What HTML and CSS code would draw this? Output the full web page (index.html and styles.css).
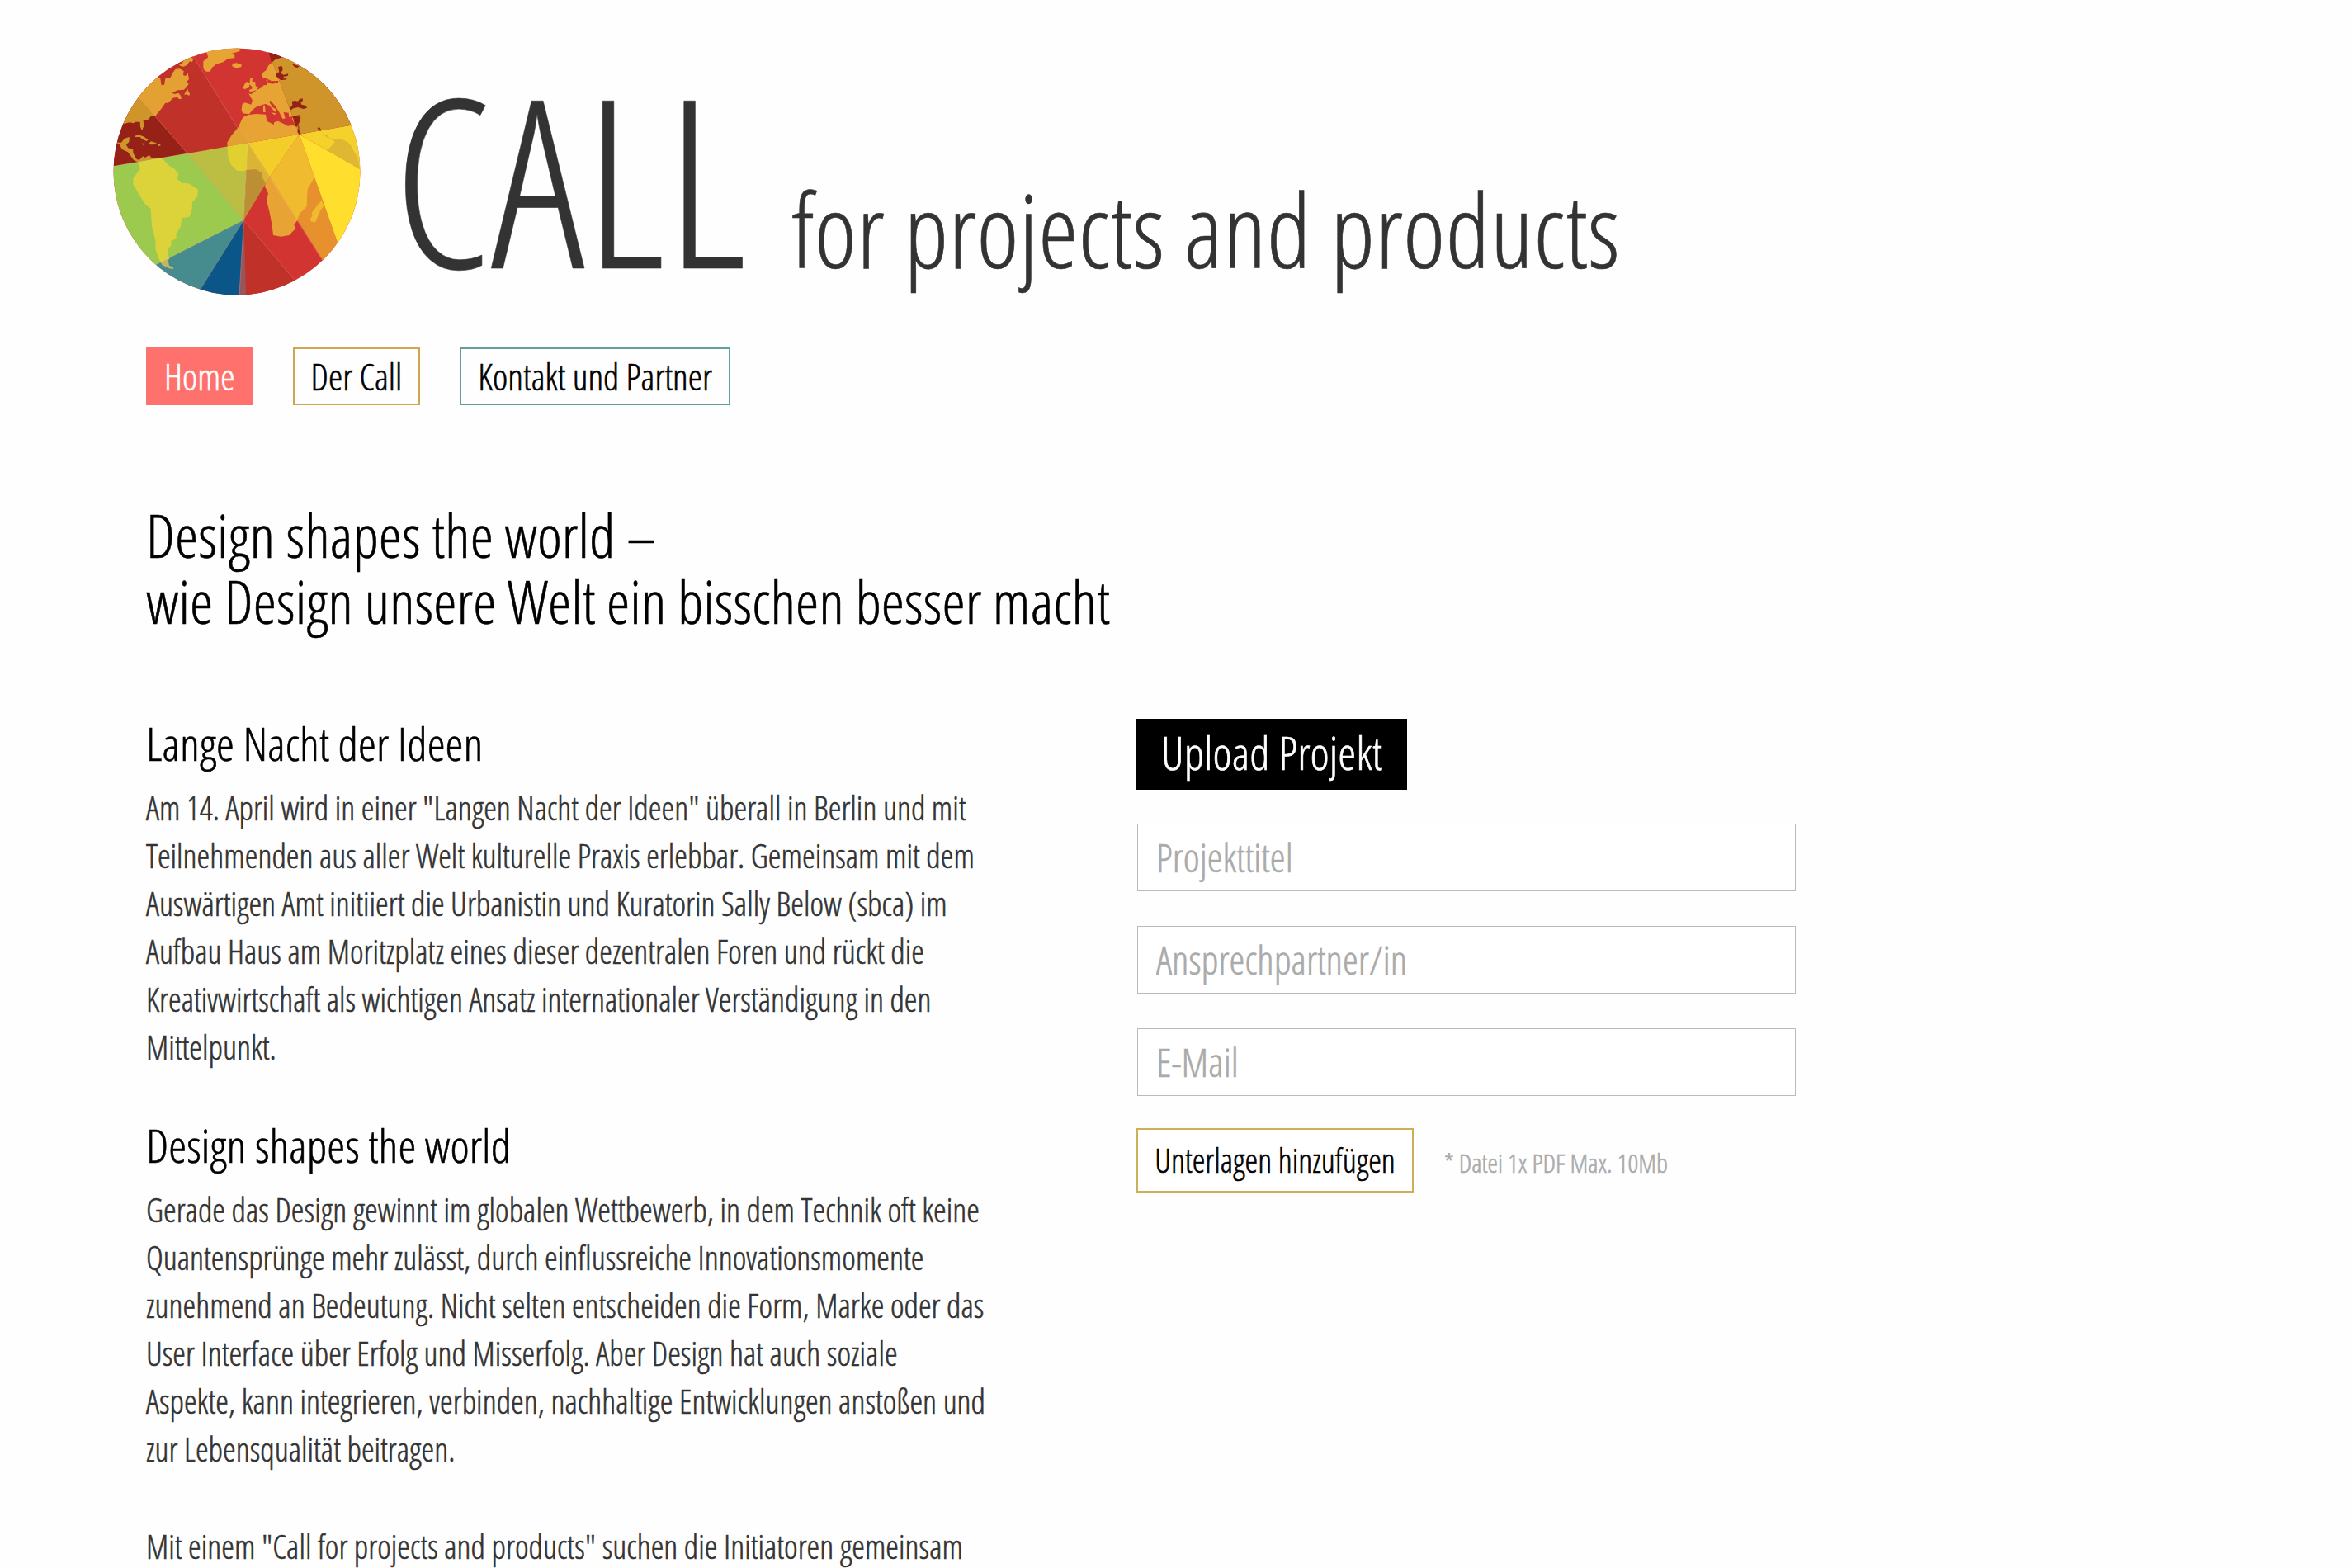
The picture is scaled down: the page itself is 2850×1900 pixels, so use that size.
FILE: index.html
```html
<!DOCTYPE html>
<html lang="de">
<head>
<meta charset="utf-8">
<title>CALL for projects and products</title>
<link rel="stylesheet" href="styles.css">
</head>
<body>
<header class="header">
  <svg class="globe" viewBox="50 56 900 900" aria-hidden="true">
    <defs>
      <clipPath id="disc"><circle cx="500" cy="506" r="448.5"/></clipPath>
      <clipPath id="r1"><path d="M0 495L320 440 145 238 0 70Z"/></clipPath>
      <clipPath id="r2"><path d="M145 238L320 440 540 402 500 343 340 85 300 0 0 0 0 70Z"/></clipPath>
      <clipPath id="r3"><path d="M320 0L340 85 500 343 540 402 727 370 615 70 590 0Z"/></clipPath>
      <clipPath id="r4"><path d="M590 0L615 70 727 370 1000 323V0Z"/></clipPath>
      <clipPath id="r5"><path d="M0 495L320 440 525 682 205 845 0 950Z"/></clipPath>
      <clipPath id="r6"><path d="M320 440L540 402 525 682Z"/></clipPath>
      <clipPath id="r7"><path d="M540 402L525 682 620 525Z"/></clipPath>
      <clipPath id="r8"><path d="M620 525L525 682 760 960 890 950Z"/></clipPath>
      <clipPath id="r9"><path d="M727 370L620 525 890 950 932 950Z"/></clipPath>
      <clipPath id="r10"><path d="M525 682L205 845 0 950 360 950Z"/></clipPath>
      <path id="land" d="M388 68L396 90 378 105 378 130Q384 145 402 142L412 126 425 115 450 108 468 95 492 93 492 82 478 78 511 68 508 40 388 40Z
        M483 113L500 111 518 118 515 126 498 129 484 124Z
        M213 162L222 168 226 192 236 190 240 168 258 165 268 145 277 133 292 132 307 140 305 155 313 158 322 148 326 170 318 178 325 188 318 197 308 208 284 210 264 220 275 224 288 220 296 230 299 241 289 242 284 235 268 238 250 256 240 256 225 278 203 304 188 304 178 316 160 320 162 340 155 357 149 343 148 325 130 325 125 330 110 327 88 332 20 332 20 160Z
        M320 203L324 215 329 222 327 230 318 225 308 226 315 215Z
        M288 112L301 115 308 95 320 100 330 88 342 95 338 107 328 105 320 118 306 124 294 121Z
        M62 400L80 400 92 385 110 380 108 398 98 408 104 420 122 425 124 440 135 460 145 464 158 450 166 455 182 446 188 454 208 457 230 458 240 470 255 485 275 498 288 515 284 535 292 538 300 547 325 549 350 565 359 572 357 595 338 617 337 645 328 670 300 675 296 705 279 735 280 750 262 757 261 776 248 785 248 805 256 822 250 828 254 848 266 852 271 860 254 858 228 845 214 818 205 790 204 755 191 705 187 642 166 624 138 578 123 552 123 530 148 498 145 473 125 464 104 435 82 424 74 408Z
        M127 377L142 372 160 378 178 390 172 395 156 388 148 380 130 380Z M179 404L188 396 208 402 204 407 188 408Z M212 405H222V412H214Z M155 402L164 406 158 409Z
        M521 294L517 282 520 260 530 255 552 262 557 247 543 222 552 225 572 210 590 200 598 192 609 191 607 172 612 168 612 185 622 183 626 188 650 182 652 168 660 172 678 172 684 165 640 176 625 176 614 170 604 166 595 168 592 148 606 138 615 120 640 98 660 92 720 30 1000 50V325L727 370 722 340 700 338 685 340 676 335 650 322 636 326 634 335 609 322 605 298 570 296 540 300 522 308 505 345 480 375 465 400 468 455 480 482 500 502 525 504 535 500 570 497 590 510 592 528 604 545 602 560 614 585 608 610 618 650 628 700 632 737 660 742 690 737 714 712 708 700 720 683 728 658 754 633 757 570 780 530 830 430 727 370 726 340 710 335 700 310 712 312 729 306 727 300 690 308 688 292 670 290 676 312 667 315 654 290 640 268 622 247 618 253 630 272 644 280 642 291 632 282 618 265 604 260 590 264 572 270 558 280 545 297Z
        M552 164L557 168 555 178 567 180 568 194 577 200 572 210 548 216 544 210 556 204 554 196 546 188 548 170Z M528 188L536 179 547 184 545 200 527 207 523 200Z
        M623 291L642 294 638 300Z M596 265H602L604 290H596Z
        M807 611L817 630 803 648 786 689 770 688 767 678 775 665 772 655 790 632Z"/>
    </defs>
    <g clip-path="url(#disc)">
      <rect x="40" y="40" width="920" height="920" fill="#d23431"/>
      <path fill="#962117" d="M0 495L320 440 145 238 0 70Z"/>
      <path fill="#c0312a" d="M145 238L320 440 540 402 500 343 340 85 300 0 0 0 0 70Z"/>
      <path fill="#962117" d="M590 0L615 70 727 370 1000 323V0Z"/>
      <path fill="#9bca4e" d="M0 495L320 440 525 682 205 845 0 950Z"/>
      <path fill="#bcbd43" d="M320 440L540 402 525 682Z"/>
      <path fill="#bc8f35" d="M540 402L525 682 620 525Z"/>
      <path fill="#f3ce2a" d="M540 402L727 370 620 525Z"/>
      <path fill="#e6912d" d="M727 370L620 525 890 950 932 950Z"/>
      <path fill="#ffde2e" d="M727 370L932 950 1000 950V527Z"/>
      <path fill="#f4d12b" d="M727 370L1000 323V527Z"/>
      <path fill="#dfb732" d="M803 357L815 370 830 375 838 385 862 390 882 388 905 400 918 415 928 438 938 450 948 497 818 422 835 422 856 400 848 385 830 383 815 372Z"/>
      <path fill="#468c8e" d="M525 682L205 845 0 950 357 950Z"/>
      <path fill="#0a5689" d="M525 682L350 962H508Z"/>
      <path fill="#97575a" d="M525 682L508 970H535Z"/>
      <path fill="#c0312a" d="M525 682L534 970H770Z"/>
      <use href="#land" fill="#cf952b" clip-path="url(#r1)"/>
      <use href="#land" fill="#e2a132" clip-path="url(#r2)"/>
      <use href="#land" fill="#e7a434" clip-path="url(#r3)"/>
      <use href="#land" fill="#cf952b" clip-path="url(#r4)"/>
      <use href="#land" fill="#dcd23a" clip-path="url(#r5)"/>
      <use href="#land" fill="#e2d030" clip-path="url(#r6)"/>
      <use href="#land" fill="#dcb433" clip-path="url(#r7)"/>
      <use href="#land" fill="#e7a434" clip-path="url(#r8)"/>
      <use href="#land" fill="#f0bb2e" clip-path="url(#r9)"/>
      <use href="#land" fill="#c5b562" clip-path="url(#r10)"/>
      <path fill="#962117" d="M600 60L617 74 625 106 640 98 652 92 664 92 662 60Z M650 125L664 122 667 135 660 148 670 154 687 150 685 158 670 160 670 172 660 174 644 160 642 150 654 144Z M700 114L728 123 720 128 710 126Z M691 277L702 264 700 250 712 248 722 250 728 242 739 240 740 248 732 254 735 262 752 266 755 274 742 278 722 272 705 276 697 282Z M704 308L732 307 731 318 724 334 716 345 710 335Z M722 348L733 368 727 371 720 362Z M792 347L800 345 808 356 803 358Z"/>
      <path class="seam" d="M145 238L320 440 525 682 712 902M340 85L500 343 540 402 720 685 812 830M0 495L320 440M540 402L525 682 205 845M525 682L508 970M525 682L365 938"/>
    </g>
  </svg>
  <h1 class="title"><span class="call">CALL</span><span class="sub">for projects and products</span></h1>
</header>
<nav class="nav">
  <a class="tab tab-home">Home</a>
  <a class="tab tab-call">Der Call</a>
  <a class="tab tab-kontakt">Kontakt und Partner</a>
</nav>
<main class="main">
  <h2 class="headline">Design shapes the world –<br>wie Design unsere Welt ein bisschen besser macht</h2>
  <div class="columns">
    <div class="text">
      <h3>Lange Nacht der Ideen</h3>
      <p>Am 14. April wird in einer "Langen Nacht der Ideen" überall in Berlin und mit<br>Teilnehmenden aus aller Welt kulturelle Praxis erlebbar. Gemeinsam mit dem<br>Auswärtigen Amt initiiert die Urbanistin und Kuratorin Sally Below (sbca) im<br>Aufbau Haus am Moritzplatz eines dieser dezentralen Foren und rückt die<br>Kreativwirtschaft als wichtigen Ansatz internationaler Verständigung in den<br>Mittelpunkt.</p>
      <h3>Design shapes the world</h3>
      <p>Gerade das Design gewinnt im globalen Wettbewerb, in dem Technik oft keine<br>Quantensprünge mehr zulässt, durch einflussreiche Innovationsmomente<br>zunehmend an Bedeutung. Nicht selten entscheiden die Form, Marke oder das<br>User Interface über Erfolg und Misserfolg. Aber Design hat auch soziale<br>Aspekte, kann integrieren, verbinden, nachhaltige Entwicklungen anstoßen und<br>zur Lebensqualität beitragen.</p>
      <p>Mit einem "Call for projects and products" suchen die Initiatoren gemeinsam</p>
    </div>
    <form class="form">
      <div class="upload">Upload Projekt</div>
      <input class="field" type="text" placeholder="Projekttitel">
      <input class="field" type="text" placeholder="Ansprechpartner/in">
      <input class="field" type="text" placeholder="E-Mail">
      <div class="attach">
        <button class="add" type="button">Unterlagen hinzufügen</button>
        <span class="note">* Datei 1x PDF Max. 10Mb</span>
      </div>
    </form>
  </div>
</main>
</body>
</html>
```
FILE: styles.css
```css
* { box-sizing: border-box; margin: 0; padding: 0; }
html { height: 1900px; overflow: hidden; }
body {
  height: 1900px;
  overflow: hidden;
  background: #fefefe;
  color: #000;
  font-family: "Open Sans Condensed Light", "Open Sans", sans-serif;
  font-weight: 300;
  font-stretch: 75%;
  font-kerning: none;
  -webkit-text-stroke: .6px;
}
.header { display: flex; height: 421px; padding: 58px 0 0 137px; }
.globe { width: 300px; height: 300px; flex: none; }
.seam { fill: none; stroke: #fff; stroke-opacity: .35; stroke-width: 1.5; }
.title {
  display: flex;
  align-items: baseline;
  margin: 15px 0 0 39px;
  height: 284px;
  line-height: 284px;
  font-weight: 300;
  color: #333;
  white-space: nowrap;
}
.call { font-size: 284px; }
.sub { font-size: 124px; margin-left: 54px; }
.nav { display: flex; gap: 48px; padding-left: 177px; }
.tab {
  height: 70px;
  line-height: 66px;
  padding: 0 20px;
  border: 2px solid;
  font-size: 44px;
  white-space: nowrap;
}
.tab-home { background: #ff716c; border-color: #ff716c; color: #fff; }
.tab-call { border-color: #cfa550; }
.tab-kontakt { border-color: #619f9f; }
.main { padding: 117px 0 0 177px; }
.headline { font-size: 72px; line-height: 80px; font-weight: 300; white-space: nowrap; }
.columns { display: flex; margin-top: 103px; }
.text { width: 1200px; flex: none; white-space: nowrap; }
.text h3 { font-size: 56px; line-height: 58px; font-weight: 300; margin-bottom: 21px; }
.text p { font-size: 40px; line-height: 58px; color: #333; margin-bottom: 60px; }
.form { width: 800px; display: flex; flex-direction: column; align-items: flex-start; }
.upload {
  width: 328px;
  height: 86px;
  line-height: 80px;
  padding: 0 30px;
  margin-bottom: 41px;
  background: #000;
  color: #fff;
  font-size: 56px;
  white-space: nowrap;
}
.field {
  width: 798px;
  height: 82px;
  margin: 0 0 42px 1px;
  padding: 0 22px 1px;
  border: 1px solid #bbb;
  background: #fff;
  font: inherit;
  font-kerning: none;
  font-size: 48px;
}
.field::placeholder { color: #aaa; opacity: 1; }
.attach { display: flex; align-items: baseline; margin-top: -3px; }
.add {
  width: 336px;
  height: 78px;
  padding: 0 0 1px;
  border: 2px solid #cdb055;
  background: #fff;
  font: inherit;
  font-kerning: none;
  font-size: 40px;
  color: #000;
}
.note { margin-left: 37px; font-size: 32px; color: #aaa; }
```
